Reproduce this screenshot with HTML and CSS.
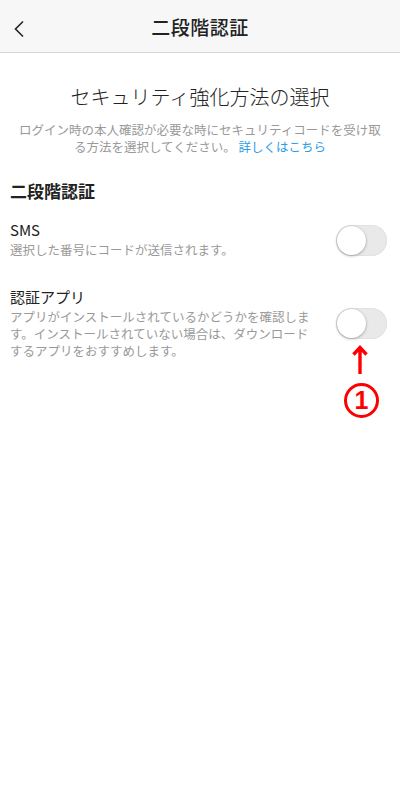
FILE: index.html
```html
<!DOCTYPE html>
<html lang="ja">
<head>
<meta charset="utf-8">
<link rel="stylesheet" href="styles.css">
</head>
<body>
<header class="topbar">
  <svg class="back" width="12" height="18" viewBox="0 0 12 18"><path d="M10 1.5 L2.5 9 L10 16.5" fill="none" stroke="#222" stroke-width="1.6"/></svg>
  <h1 class="title">二段階認証</h1>
</header>
<main class="content">
  <h2 class="headline">セキュリティ強化方法の選択</h2>
  <p class="lead">ログイン時の本人確認が必要な時にセキュリティコードを受け取る方法を選択してください。 <span class="link">詳しくはこちら</span></p>
  <h3 class="section">二段階認証</h3>
  <div class="row row-sms">
    <div class="text">
      <div class="label">SMS</div>
      <div class="desc">選択した番号にコードが送信されます。</div>
    </div>
    <div class="toggle"><span class="knob"></span></div>
  </div>
  <div class="row row-app">
    <div class="text">
      <div class="label">認証アプリ</div>
      <div class="desc">アプリがインストールされているかどうかを確認します。インストールされていない場合は、ダウンロードするアプリをおすすめします。</div>
    </div>
    <div class="side">
      <div class="toggle"><span class="knob"></span></div>
      <svg class="arrow" width="16" height="32" viewBox="0 0 16 32"><path d="M8 30 V4 M1.5 10.5 L8 3.5 L14.5 10.5" fill="none" stroke="#f00" stroke-width="3.4"/></svg>
      <span class="mark">1</span>
    </div>
  </div>
</main>
</body>
</html>
```
FILE: styles.css
```css
* { box-sizing: border-box; }
html, body { margin: 0; padding: 0; background: #fff; }
body {
  width: 400px; height: 800px;
  font-family: "Noto Sans CJK JP", "Noto Sans", sans-serif;
  color: #222;
}
.topbar {
  height: 53px;
  background: #f7f7f7;
  border-bottom: 1px solid #d6d6d6;
  display: flex; align-items: center; justify-content: center;
  position: relative;
}
.back { position: absolute; left: 13px; top: 20px; }
.title { margin: 0; font-size: 19px; font-weight: 500; letter-spacing: 0.5px; color: #222; }
.content { padding: 0 10px; }
.headline {
  margin: 26px 0 0; text-align: center;
  font-size: 20px; font-weight: 300; line-height: 36px; color: #222;
}
.lead {
  margin: 6px 0 0; text-align: center;
  font-size: 12.5px; line-height: 17px; color: #999;
  padding: 0 6px;
}
.link { color: #2d9de6; }
.section { margin: 22px 0 0; font-size: 17px; font-weight: 700; line-height: 28px; }
.row { display: flex; justify-content: space-between; align-items: flex-start; }
.row-sms { margin-top: 15px; }
.row-app { margin-top: 29px; }
.text { width: 310px; }
.label { font-size: 15px; line-height: 20px; color: #222; }
.desc { font-size: 12.5px; line-height: 17px; color: #999; margin-top: 1px; }
.row-sms .toggle { margin-top: 5px; }
.toggle {
  width: 51px; height: 31px; border-radius: 16px;
  background: #e9e9e9; position: relative; margin-right: 3px;
  box-shadow: inset 0 0 0 1px #e2e2e2;
}
.knob {
  position: absolute; left: 1px; top: 1px; width: 29px; height: 29px; border-radius: 50%;
  background: #fff; box-shadow: 0 1px 3px rgba(0,0,0,0.28), 0 0 0 0.5px rgba(0,0,0,0.08);
}
.side { display: flex; flex-direction: column; align-items: center; margin-top: 21px; }
.arrow { margin-top: 5px; margin-left: -6px; }
.mark {
  display: flex; align-items: center; justify-content: center;
  width: 35px; height: 35px; border: 3px solid #f00; border-radius: 50%;
  color: #f00; font-size: 25px; font-weight: 700; line-height: 1;
  font-family: "Liberation Sans", sans-serif;
  margin-top: 7px; margin-left: -3px;
}
```
